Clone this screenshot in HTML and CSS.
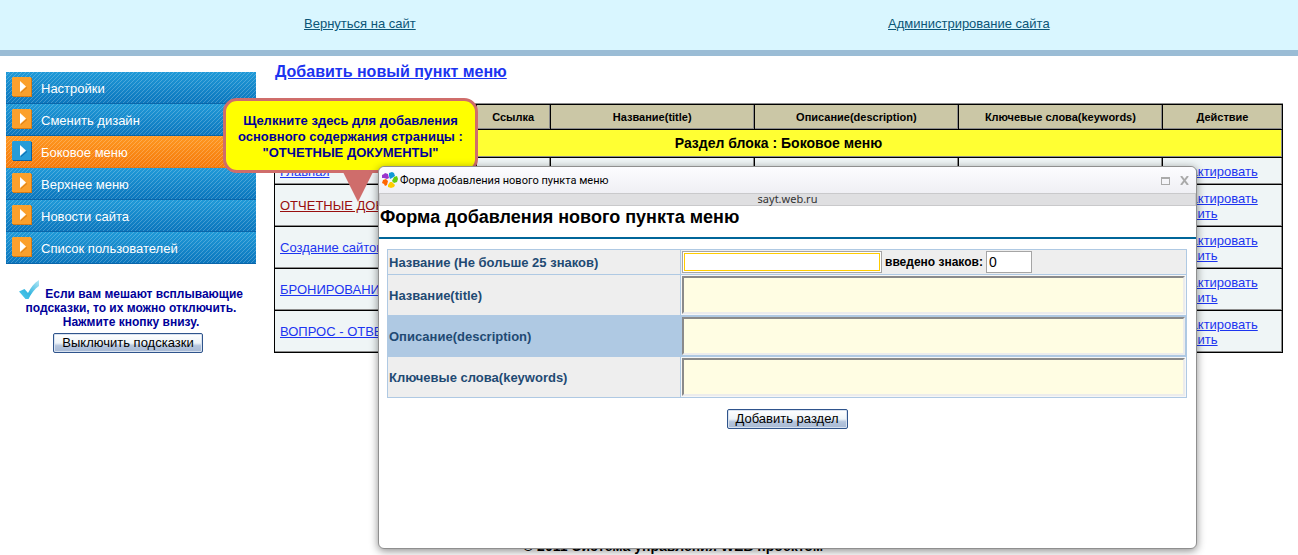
FILE: index.html
```
<!DOCTYPE html>
<html lang="ru">
<head>
    <meta charset="utf-8">
    <title>Администрирование сайта</title>
    <link rel="stylesheet" href="styles.css">
</head>
<body>
    <header class="top">
        <a href="#">Вернуться на сайт</a>
        <a href="#">Администрирование сайта</a>
    </header>

    <div class="page">
        <aside class="sidebar">
            <nav class="menu">
                <a href="#"><svg viewBox="0 0 20 20"><path class="edge" d="M0 1h20v19H1z"/><path class="face" d="M1 0h18v19H0V1z"/><path class="shade" d="M9 15l6-5v1l-6 5z"/><path class="arrow" d="M8 4l6 5.500-6 5.500z"/></svg>Настройки</a>
                <a href="#"><svg viewBox="0 0 20 20"><path class="edge" d="M0 1h20v19H1z"/><path class="face" d="M1 0h18v19H0V1z"/><path class="shade" d="M9 15l6-5v1l-6 5z"/><path class="arrow" d="M8 4l6 5.500-6 5.500z"/></svg>Сменить дизайн</a>
                <a href="#" class="active"><svg viewBox="0 0 20 20"><path class="edge" d="M0 1h20v19H1z"/><path class="face" d="M1 0h18v19H0V1z"/><path class="shade" d="M9 15l6-5v1l-6 5z"/><path class="arrow" d="M8 4l6 5.500-6 5.500z"/></svg>Боковое меню</a>
                <a href="#"><svg viewBox="0 0 20 20"><path class="edge" d="M0 1h20v19H1z"/><path class="face" d="M1 0h18v19H0V1z"/><path class="shade" d="M9 15l6-5v1l-6 5z"/><path class="arrow" d="M8 4l6 5.500-6 5.500z"/></svg>Верхнее меню</a>
                <a href="#"><svg viewBox="0 0 20 20"><path class="edge" d="M0 1h20v19H1z"/><path class="face" d="M1 0h18v19H0V1z"/><path class="shade" d="M9 15l6-5v1l-6 5z"/><path class="arrow" d="M8 4l6 5.500-6 5.500z"/></svg>Новости сайта</a>
                <a href="#"><svg viewBox="0 0 20 20"><path class="edge" d="M0 1h20v19H1z"/><path class="face" d="M1 0h18v19H0V1z"/><path class="shade" d="M9 15l6-5v1l-6 5z"/><path class="arrow" d="M8 4l6 5.500-6 5.500z"/></svg>Список пользователей</a>
            </nav>
            <div class="hint">
                <svg class="check" viewBox="0 0 20 20">
                    <defs>
                        <linearGradient id="checkFill" x1="1" y1="0" x2="0" y2="1">
                            <stop offset="0" stop-color="#b5e8f5"/>
                            <stop offset="0.600" stop-color="#35b6e0"/>
                            <stop offset="1" stop-color="#55cdec"/>
                        </linearGradient>
                    </defs>
                    <path fill="url(#checkFill)" d="M0 11.500L5.500 9l3.500 4C12 7.500 15 3 20 0v6c-4.500 3-8 8-10.500 13H6.500z"/>
                </svg>
                Если вам мешают всплывающие<br>подсказки, то их можно отключить.<br>Нажмите кнопку внизу.
            </div>
            <button type="button" class="btn">Выключить подсказки</button>
        </aside>

        <main class="content">
            <a href="#" class="add-link">Добавить новый пункт меню</a>
            <table class="list">
                <colgroup>
                    <col class="c-name">
                    <col class="c-link">
                    <col class="c-text">
                    <col class="c-text">
                    <col class="c-text">
                    <col class="c-action">
                </colgroup>
                <tr class="head">
                    <th></th>
                    <th>Ссылка</th>
                    <th>Название(title)</th>
                    <th>Описание(description)</th>
                    <th>Ключевые слова(keywords)</th>
                    <th>Действие</th>
                </tr>
                <tr class="block">
                    <th colspan="6">Раздел блока : Боковое меню</th>
                </tr>
                <tr class="first">
                    <td><a href="#">Главная</a></td>
                    <td>index.html</td>
                    <td>Главная</td>
                    <td>Главная</td>
                    <td>Главная</td>
                    <td><a href="#">Редактировать</a></td>
                </tr>
                <tr>
                    <td><a href="#" class="current">ОТЧЕТНЫЕ ДОКУМЕНТЫ</a></td>
                    <td></td>
                    <td></td>
                    <td></td>
                    <td></td>
                    <td><a href="#">Редактировать</a><br><a href="#">Удалить</a></td>
                </tr>
                <tr>
                    <td><a href="#">Создание сайтов</a></td>
                    <td></td>
                    <td></td>
                    <td></td>
                    <td></td>
                    <td><a href="#">Редактировать</a><br><a href="#">Удалить</a></td>
                </tr>
                <tr>
                    <td><a href="#">БРОНИРОВАНИЕ</a></td>
                    <td></td>
                    <td></td>
                    <td></td>
                    <td></td>
                    <td><a href="#">Редактировать</a><br><a href="#">Удалить</a></td>
                </tr>
                <tr>
                    <td><a href="#">ВОПРОС - ОТВЕТ</a></td>
                    <td></td>
                    <td></td>
                    <td></td>
                    <td></td>
                    <td><a href="#">Редактировать</a><br><a href="#">Удалить</a></td>
                </tr>
            </table>
        </main>
    </div>

    <footer class="footer">© 2011 Система управления WEB проектом</footer>

    <div class="tooltip">Щелкните здесь для добавления<br>основного содержания страницы :<br>"ОТЧЕТНЫЕ ДОКУМЕНТЫ"</div>

    <!-- Окно добавления пункта -->
    <div class="window">
        <div class="window-bar">
            <svg class="logo" viewBox="0 0 16 16">
                <path fill="#9933cc" d="M0 3l2-1 1-1 3 1 1 4-2 1-3-1H0z"/>
                <path fill="#1199d5" d="M7 1l3-1 2 1 1 3-3 2-2 1-1-3z"/>
                <path fill="#66cc11" d="M12 5l3-1 1 3-1 3-3 1-2-2 1-2z"/>
                <path fill="#ffcc00" d="M8 10l2 0 3 3-1 2-3 1-3-1 0-2z"/>
                <path fill="#ff6600" d="M1 8l3-1 2 2-1 4-2 1-1-2-2-1z"/>
            </svg>
            <span class="window-title">Форма добавления нового пункта меню</span>
            <button type="button" class="tool" aria-label="Развернуть">
                <svg viewBox="0 0 9 9"><path d="M0 1h9v8H0z M1 3v5h7V3z" fill="#aaa" fill-rule="evenodd"/></svg>
            </button>
            <button type="button" class="tool" aria-label="Закрыть">
                <svg viewBox="0 0 9 9"><path d="M1 0l7 9M8 0l-7 9" stroke="#aaa" stroke-width="2"/></svg>
            </button>
        </div>
        <div class="window-host">sayt.web.ru</div>
        <h1>Форма добавления нового пункта меню</h1>
        <form class="form">
            <table>
                <tr class="short">
                    <th><label for="name">Название (Не больше 25 знаков)</label></th>
                    <td>
                        <div class="fields">
                            <input type="text" id="name" class="name">
                            <label for="count">введено знаков:</label>
                            <input type="text" id="count" class="count" value="0">
                        </div>
                    </td>
                </tr>
                <tr>
                    <th><label for="title">Название(title)</label></th>
                    <td><textarea id="title"></textarea></td>
                </tr>
                <tr class="hover">
                    <th><label for="description">Описание(description)</label></th>
                    <td><textarea id="description"></textarea></td>
                </tr>
                <tr>
                    <th><label for="keywords">Ключевые слова(keywords)</label></th>
                    <td><textarea id="keywords"></textarea></td>
                </tr>
            </table>
            <button type="submit" class="btn">Добавить раздел</button>
        </form>
    </div>
</body>
</html>
```
FILE: styles.css
```
* {
    box-sizing: border-box;
}
body {
    margin: 0;
    min-height: 100vh;
    display: flex;
    flex-direction: column;
    background-color: #fff;
    font-family: "Liberation Sans", Arial, sans-serif;
    font-size: 13px;
    line-height: 15px;
}
a {
    color: #1c34f0;
}

/* Header */
.top {
    display: grid;
    grid-template-columns: 13fr 9fr;
    justify-items: center;
    height: 56px;
    padding: 16px 80px 0 0;
    background-color: #d9f6ff;
    border-bottom: 6px solid #9abcd5;
}
.top a {
    color: #0b5577;
}

.page {
    display: flex;
    gap: 18px;
    padding: 8px 15px 0 6px;
}

/* Left menu */
.sidebar {
    flex: 0 0 250px;
    padding-top: 8px;
    text-align: center;
}
.menu {
    margin-bottom: 16px;
}
.menu a {
    display: flex;
    gap: 9px;
    height: 32px;
    padding: 5px 6px 0;
    line-height: 24px;
    color: #fff;
    text-decoration: none;
    border-bottom: 1px solid #0a66aa;
    background-image: linear-gradient(135deg, transparent 40%, rgba(255, 255, 255, 0.22) 40% 60%, transparent 60%), linear-gradient(#209ad8, #0b76bd);
    background-size: 4px 4px, 100% 100%;
}
.menu a.active {
    border-bottom-color: #e87a15;
    background-image: linear-gradient(135deg, transparent 40%, rgba(255, 255, 255, 0.22) 40% 60%, transparent 60%), linear-gradient(#ff9821, #f57a0a);
}
.menu svg {
    width: 20px;
    height: 20px;
}
.menu .face {
    fill: #fba02c;
}
.menu .edge,
.menu .shade {
    fill: #d57b16;
}
.menu .arrow {
    fill: #fff;
}
.menu .active .face {
    fill: #259cd8;
}
.menu .active .edge,
.menu .active .shade {
    fill: #0a62a8;
}
.hint {
    margin-bottom: 4px;
    font-size: 12px;
    font-weight: bold;
    line-height: 14px;
    color: #000099;
}
.check {
    width: 20px;
    height: 20px;
    margin: 0 3px -2px 0;
}

.btn {
    height: 20px;
    padding: 0 8px;
    border: 1px solid #2f548c;
    border-radius: 2px;
    background: linear-gradient(#fff, #eef4f8 50%, #b5c5dd 65%, #a7b9d4);
    box-shadow: inset 0 0 0 1px #d8e2ef;
    font-family: inherit;
    font-size: 13px;
    line-height: 18px;
    color: #000;
}
.sidebar .btn {
    margin-right: 6px;
}

/* Menu items */
.content {
    flex: 1;
}
.add-link {
    display: block;
    margin: 0 0 24px 1px;
    font-size: 16px;
    font-weight: bold;
    line-height: 16px;
}
.list {
    width: 100%;
    table-layout: fixed;
    border-collapse: collapse;
    border: 1px solid #000;
    box-shadow: 0 -1px #8c8c8c;
}
.c-name {
    width: 20%;
}
.c-link {
    width: 74px;
}
.c-text {
    width: 204px;
}
.c-action {
    width: 120px;
}
.list th,
.list td {
    border: 1px solid #000;
    box-shadow: inset -1px -1px #8c8c8c;
}
.list td {
    height: 42px;
    padding: 0 5px;
    background-color: #eff5f6;
}
.list .first td {
    height: 27px;
}
.list .head th {
    height: 25px;
    padding: 0;
    background-color: #cbc7a6;
    font-size: 11px;
}
.list .block th {
    height: 28px;
    padding: 0;
    background-color: #ffff33;
    font-size: 14px;
}
.list .current {
    color: #990f0f;
}

.footer {
    margin-top: auto;
    padding-left: 48px;
    text-align: center;
    font-size: 14px;
    font-weight: bold;
    line-height: 18px;
}

/* Tooltip over the menu list */
.tooltip {
    position: absolute;
    top: 98px;
    left: 223px;
    padding: 12px 12px 9px;
    border: 3px solid #cf6d6b;
    border-radius: 14px;
    background-color: #ffff00;
    text-align: center;
    font-size: 13px;
    font-weight: bold;
    line-height: 16px;
    color: #000099;
}
.tooltip::after {
    content: "";
    position: absolute;
    top: 100%;
    left: 116px;
    border: 16px solid transparent;
    border-top: 32px solid #cf6d6b;
    border-bottom: 0;
}

/* Popup window */
.window {
    position: absolute;
    top: 166px;
    left: 378px;
    width: 63.1%;
    height: 383px;
    border: 1px solid #8f8f8f;
    border-radius: 6px;
    background-color: #fff;
    box-shadow: 0 2px 8px rgba(0, 0, 0, 0.45);
}
.window-bar {
    display: flex;
    align-items: center;
    gap: 10px;
    height: 26px;
    padding: 0 7px 0 3px;
    border-radius: 6px 6px 0 0;
    background: linear-gradient(#fcfcff, #efeff4);
}
.logo {
    width: 16px;
    height: 16px;
}
.window-title {
    flex: 1;
    margin-left: -8px;
    font-family: Roboto, Tahoma, sans-serif;
    font-size: 11px;
}
.tool {
    display: flex;
    padding: 0;
    border: 0;
    background: none;
}
.tool svg {
    width: 9px;
    height: 9px;
}
.window-host {
    height: 13px;
    border: 1px solid #c9c9cb;
    background-color: #dfdfe1;
    text-align: center;
    font-family: "Noto Sans", Tahoma, sans-serif;
    font-size: 11px;
    line-height: 10px;
    color: #333;
}
.window h1 {
    margin: 0;
    padding: 0 1px 9px;
    border-bottom: 2px solid #006699;
    font-size: 18px;
    line-height: 22px;
}
.form {
    padding: 10px 9px 0 8px;
    text-align: center;
}
.form table {
    width: 100%;
    margin-bottom: 11px;
    border-collapse: collapse;
    text-align: left;
}
.form th,
.form td {
    height: 41px;
    padding: 0 1px;
    border: 1px solid #afc9e3;
    background-color: #eee;
}
.form th {
    width: 293px;
    color: #1f4a73;
}
.form td {
    background-color: #f6f6f6;
}
.form .short th,
.form .short td {
    height: 25px;
    background-color: #eee;
}
.form .hover th,
.form .hover td {
    background-color: #afc9e3;
}
.fields {
    display: flex;
    align-items: center;
    gap: 3px;
    font-size: 12px;
    font-weight: bold;
}
.fields input {
    height: 22px;
    padding: 0 2px;
    border: 1px solid #a5a5a5;
    font-family: inherit;
    font-size: 14px;
}
.fields .name {
    width: 200px;
    box-shadow: inset 0 0 0 1px #fff, inset 0 0 0 2px #ffcc00;
}
.fields .count {
    width: 46px;
}
textarea {
    display: block;
    width: 100%;
    height: 38px;
    border: 2px solid;
    border-color: #8a8a8a #ececec #ececec #8a8a8a;
    background-color: #fffde3;
    resize: none;
}
```
